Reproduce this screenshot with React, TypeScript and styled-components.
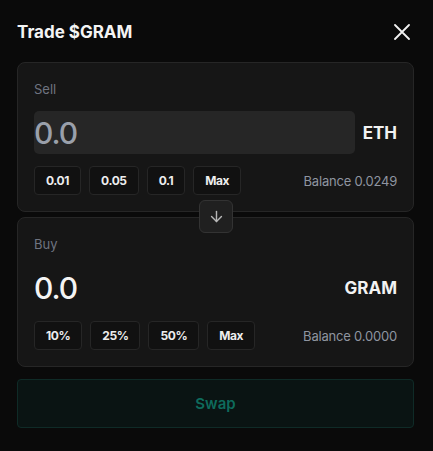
import { ArrowDown } from "lucide-react";
import styled, { createGlobalStyle } from "styled-components";

const Global = createGlobalStyle`
  html, body {
    margin: 0;
    padding: 0;
    background: #0a0a0a;
  }
  body {
    font-family: Inter, "Noto Sans", sans-serif;
    color: #f2f2f2;
  }
  * {
    box-sizing: border-box;
  }
`;

const Modal = styled.div`
  width: 433px;
  height: 451px;
  padding: 17px 19px 17px 17px;
  background: #0a0a0a;
  display: flex;
  flex-direction: column;
`;

const Header = styled.div`
  display: flex;
  align-items: center;
  justify-content: space-between;
  height: 30px;
  margin-bottom: 15px;
`;

const Title = styled.h1`
  margin: 0;
  font-size: 17px;
  line-height: 30px;
  font-weight: 700;
  color: #f4f4f4;
`;

const Close = styled.button`
  background: none;
  border: 0;
  padding: 0;
  margin-right: 4px;
  display: flex;
  cursor: pointer;
  color: #f2f2f2;
`;

const Stack = styled.div`
  position: relative;
  display: flex;
  flex-direction: column;
  gap: 5px;
`;

const Card = styled.div`
  background: #161616;
  border: 1px solid #262626;
  border-radius: 8px;
  padding: 17px 16px 16px;
  display: flex;
  flex-direction: column;
`;

const Label = styled.div`
  font-size: 13px;
  line-height: 18px;
  color: #6f7480;
  margin-bottom: 13px;
`;

const AmountRow = styled.div`
  display: flex;
  align-items: center;
  gap: 8px;
  height: 43px;
  margin-bottom: 12px;
`;

const Amount = styled.input<{ $filled?: boolean }>`
  flex: 1;
  min-width: 0;
  height: 43px;
  border: 0;
  outline: none;
  border-radius: 5px;
  padding: 0;
  font-family: inherit;
  font-size: 30px;
  font-weight: 500;
  letter-spacing: -1px;
  background: ${(p) => (p.$filled ? "#262626" : "transparent")};
  color: #f4f4f4;
  &::placeholder {
    color: ${(p) => (p.$filled ? "#9aa0ab" : "#f4f4f4")};
  }
`;

const Token = styled.div`
  font-size: 17px;
  font-weight: 700;
  color: #f2f2f2;
`;

const Footer = styled.div`
  display: flex;
  align-items: center;
  justify-content: space-between;
`;

const Chips = styled.div`
  display: flex;
  gap: 8px;
`;

const Chip = styled.button`
  height: 29px;
  padding: 0 11px;
  background: #111111;
  border: 1px solid #262626;
  border-radius: 4px;
  font-family: inherit;
  font-size: 12px;
  font-weight: 700;
  letter-spacing: -0.4px;
  color: #ededed;
  cursor: pointer;
`;

const Balance = styled.div`
  font-size: 13px;
  color: #8f95a0;
  letter-spacing: -0.2px;
`;

const Flip = styled.button`
  position: absolute;
  left: 182px;
  top: 138px;
  width: 34px;
  height: 33px;
  display: flex;
  align-items: center;
  justify-content: center;
  background: #202020;
  border: 1px solid #333333;
  border-radius: 6px;
  color: #b8b8b8;
  padding: 0;
  cursor: pointer;
`;

const Swap = styled.button`
  margin-top: 12px;
  height: 49px;
  width: 100%;
  background: #0a1413;
  border: 1px solid #0f2b27;
  border-radius: 4px;
  font-family: inherit;
  font-size: 15px;
  font-weight: 600;
  color: #0e6b5c;
  cursor: default;
`;

const sellChips = ["0.01", "0.05", "0.1", "Max"];
const buyChips = ["10%", "25%", "50%", "Max"];

export default function App() {
  return (
    <>
      <Global />
      <Modal>
        <Header>
          <Title>Trade $GRAM</Title>
          <Close aria-label="close">
            <svg width="16" height="16" viewBox="0 0 16 16">
              <path
                d="M1 1L15 15M15 1L1 15"
                stroke="currentColor"
                strokeWidth="1.8"
                strokeLinecap="round"
              />
            </svg>
          </Close>
        </Header>
        <Stack>
          <Card>
            <Label>Sell</Label>
            <AmountRow>
              <Amount $filled placeholder="0.0" />
              <Token>ETH</Token>
            </AmountRow>
            <Footer>
              <Chips>
                {sellChips.map((c) => (
                  <Chip key={c}>{c}</Chip>
                ))}
              </Chips>
              <Balance>Balance 0.0249</Balance>
            </Footer>
          </Card>
          <Flip aria-label="flip">
            <ArrowDown size={17} strokeWidth={2} />
          </Flip>
          <Card>
            <Label>Buy</Label>
            <AmountRow>
              <Amount placeholder="0.0" readOnly />
              <Token>GRAM</Token>
            </AmountRow>
            <Footer>
              <Chips>
                {buyChips.map((c) => (
                  <Chip key={c}>{c}</Chip>
                ))}
              </Chips>
              <Balance>Balance 0.0000</Balance>
            </Footer>
          </Card>
        </Stack>
        <Swap>Swap</Swap>
      </Modal>
    </>
  );
}
